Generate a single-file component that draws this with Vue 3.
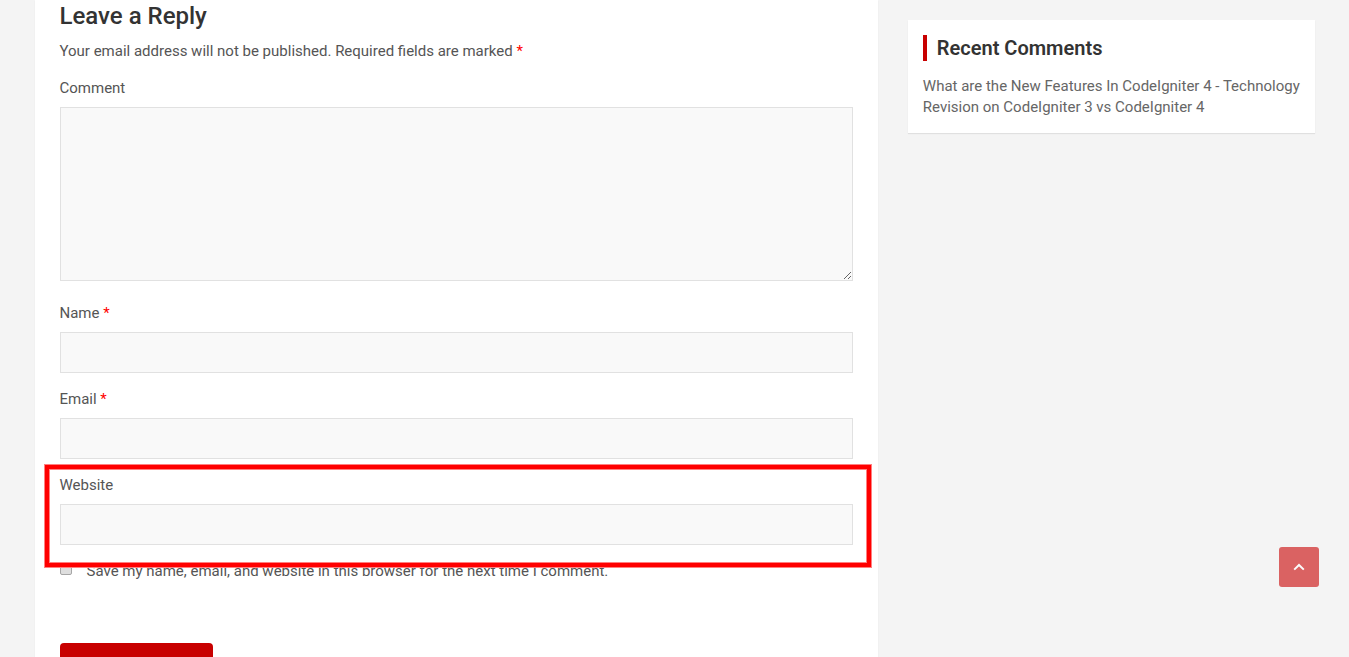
<script setup>
import { reactive } from 'vue'

const form = reactive({ comment: '', name: '', email: '', website: '', remember: false })

const fields = [
  { key: 'name', label: 'Name', type: 'text', required: true },
  { key: 'email', label: 'Email', type: 'email', required: true },
  { key: 'website', label: 'Website', type: 'url', highlighted: true },
]

function toTop() {
  window.scrollTo({ top: 0, behavior: 'smooth' })
}
</script>

<template>
  <div class="page">
    <div class="container">
      <main class="card respond">
        <h3 class="respond-title">Leave a Reply</h3>
        <form @submit.prevent>
          <p class="notes">
            Your email address will not be published. Required fields are marked
            <span class="required">*</span>
          </p>
          <div class="field field-comment">
            <label for="comment">Comment</label>
            <textarea id="comment" v-model="form.comment"></textarea>
          </div>
          <div
            v-for="f in fields"
            :key="f.key"
            class="field"
            :class="{ highlighted: f.highlighted }"
          >
            <label :for="f.key">
              {{ f.label }} <span v-if="f.required" class="required">*</span>
            </label>
            <input :id="f.key" v-model="form[f.key]" :type="f.type" :required="f.required" />
          </div>
          <div class="consent">
            <input id="remember" v-model="form.remember" type="checkbox" />
            <label for="remember">
              Save my name, email, and website in this browser for the next time I comment.
            </label>
          </div>
          <button class="submit" type="submit">Post Comment</button>
        </form>
      </main>
      <aside class="card widget">
        <h2 class="widget-title">Recent Comments</h2>
        <ul class="comments">
          <li>
            <a href="#">What are the New Features In CodeIgniter 4 - Technology Revision</a>
            on <a href="#">CodeIgniter 3 vs CodeIgniter 4</a>
          </li>
        </ul>
      </aside>
    </div>
    <button class="to-top" type="button" aria-label="Back to top" @click="toTop">
      <svg viewBox="0 0 12 8" width="12" height="8" aria-hidden="true">
        <path d="M1.2 6.6 6 2l4.8 4.6" fill="none" stroke="#fff" stroke-width="2" />
      </svg>
    </button>
  </div>
</template>

<style>
body {
  background: #f4f4f4;
}
</style>

<style scoped>
.page {
  height: 100vh;
  overflow: hidden;
  color: #555;
  font: 400 15px/22px Roboto, "Liberation Sans", sans-serif;
}
.page *,
.page *::after {
  box-sizing: border-box;
}
.container {
  display: grid;
  grid-template-columns: calc((100% + 30px) * 2 / 3 - 30px) minmax(0, 1fr);
  gap: 30px;
  align-items: start;
  max-width: 1280px;
  margin: 0 auto;
}
.card {
  background: #fff;
  box-shadow: 0 1px 1px rgba(0, 0, 0, 0.08);
}
.respond {
  padding: 2px 25px 40px;
}
.respond-title {
  margin: 0 0 10px;
  color: #333;
  font-size: 24px;
  font-weight: 500;
  line-height: 28px;
}
.notes {
  margin: 0 0 15px;
}
.required {
  color: #f00;
}
.field {
  position: relative;
  margin-bottom: 15px;
}
.field-comment {
  margin-bottom: 21px;
}
.field label {
  display: block;
  margin-bottom: 8px;
}
.field input,
.field textarea {
  display: block;
  width: 100%;
  height: 41px;
  margin: 0;
  padding: 8px 12px;
  border: 1px solid #e1e1e1;
  border-radius: 0;
  outline: 0;
  background: #f9f9f9;
  color: inherit;
  font: inherit;
}
.field textarea {
  height: 174px;
  resize: vertical;
}
.highlighted::after {
  content: "";
  position: absolute;
  inset: -9px -18px -22px -15px;
  border: 4px solid #f00;
  box-shadow: 0 0 0 1px #ff8080, inset 0 0 0 1px #ff8080;
  pointer-events: none;
}
.consent {
  display: flex;
  align-items: flex-start;
  gap: 15px;
}
.consent input {
  appearance: none;
  flex: none;
  width: 12px;
  height: 12px;
  margin: 3px 0 0;
  border: 1px solid #a6a6a6;
  border-radius: 2px;
  background: #dedede;
}
.consent input:checked {
  background: #c80000;
}
.submit {
  display: block;
  width: 153px;
  height: 50px;
  margin-top: 61px;
  padding: 0;
  border: 0;
  border-radius: 4px;
  background: #c80000;
  color: #fff;
  font: inherit;
  line-height: 18px;
}
.widget {
  margin-top: 20px;
  padding: 15px 12px 15px 15px;
}
.widget-title {
  margin: 0 0 15px;
  padding-left: 10px;
  border-left: 4px solid #c80000;
  color: #333;
  font-size: 20px;
  font-weight: 600;
  line-height: 26px;
}
.comments {
  margin: 0;
  padding: 0;
  list-style: none;
  line-height: 21px;
  color: #666;
}
.comments a {
  color: inherit;
  text-decoration: none;
}
.to-top {
  position: fixed;
  right: 30px;
  bottom: 70px;
  display: flex;
  align-items: center;
  justify-content: center;
  width: 40px;
  height: 40px;
  padding: 0;
  border: 0;
  border-radius: 3px;
  background: #c80000;
  opacity: 0.6;
}
</style>
